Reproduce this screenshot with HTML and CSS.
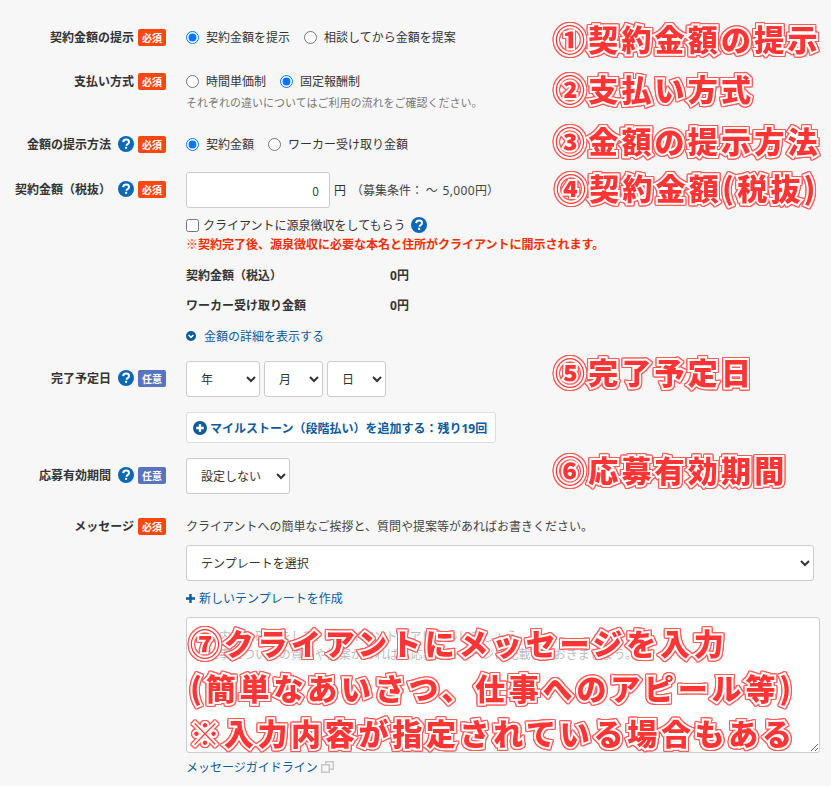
FILE: index.html
```html
<!DOCTYPE html>
<html lang="ja">
<head>
<meta charset="utf-8">
<title>応募フォーム</title>
<link rel="stylesheet" href="styles.css">
</head>
<body>
<main class="form">
  <div class="row row-1">
    <div class="label"><span>契約金額の提示</span><span class="badge req">必須</span></div>
    <div class="field radios">
      <label class="radio"><input type="radio" name="a" checked>契約金額を提示</label>
      <label class="radio"><input type="radio" name="a">相談してから金額を提案</label>
    </div>
  </div>
  <div class="row row-2">
    <div class="label"><span>支払い方式</span><span class="badge req">必須</span></div>
    <div class="field">
      <div class="radios">
        <label class="radio"><input type="radio" name="b">時間単価制</label>
        <label class="radio"><input type="radio" name="b" checked>固定報酬制</label>
      </div>
      <p class="hint">それぞれの違いについては<a class="link">ご利用の流れ</a>をご確認ください。</p>
    </div>
  </div>
  <div class="row row-3">
    <div class="label"><span>金額の提示方法</span><svg class="help" viewBox="0 0 16 16"><use href="#q"/></svg><span class="badge req">必須</span></div>
    <div class="field radios">
      <label class="radio"><input type="radio" name="c" checked>契約金額</label>
      <label class="radio"><input type="radio" name="c">ワーカー受け取り金額</label>
    </div>
  </div>
  <div class="row row-4">
    <div class="label label-amount"><span>契約金額（税抜）</span><svg class="help" viewBox="0 0 16 16"><use href="#q"/></svg><span class="badge req">必須</span></div>
    <div class="field">
      <div class="amount"><input class="amount-input" type="text" value="0"><span>円</span><span class="cond">（募集条件： ～ <span class="num">5,000</span>円）</span></div>
      <label class="check"><input type="checkbox">クライアントに源泉徴収をしてもらう<svg class="help" viewBox="0 0 16 16"><use href="#q"/></svg></label>
      <p class="warn">※契約完了後、源泉徴収に必要な本名と住所がクライアントに開示されます。</p>
      <dl class="sum">
        <dt>契約金額（税込）</dt><dd><span class="num">0</span>円</dd>
        <dt>ワーカー受け取り金額</dt><dd><span class="num">0</span>円</dd>
      </dl>
      <a class="link detail"><svg class="chev" viewBox="0 0 10 10"><circle cx="5" cy="5" r="5" fill="#0b5a99"/><path d="M2.600 4l2.400 2.400L7.400 4" fill="none" stroke="#fff" stroke-width="1.500"/></svg>金額の詳細を表示する</a>
    </div>
  </div>
  <div class="row row-5">
    <div class="label"><span>完了予定日</span><svg class="help" viewBox="0 0 16 16"><use href="#q"/></svg><span class="badge opt">任意</span></div>
    <div class="field">
      <div class="dates">
        <select class="sel sel-y"><option>年</option></select>
        <select class="sel sel-m"><option>月</option></select>
        <select class="sel sel-d"><option>日</option></select>
      </div>
      <button class="stone" type="button"><svg class="plus" viewBox="0 0 14 14"><circle cx="7" cy="7" r="7" fill="#0b5a99"/><path d="M7 3.200v7.600M3.200 7h7.600" stroke="#fff" stroke-width="2.400"/></svg><span>マイルストーン（段階払い）を追加する：残り<span class="num">19</span>回</span></button>
    </div>
  </div>
  <div class="row row-6">
    <div class="label"><span>応募有効期間</span><svg class="help" viewBox="0 0 16 16"><use href="#q"/></svg><span class="badge opt">任意</span></div>
    <div class="field"><select class="sel sel-p"><option>設定しない</option></select></div>
  </div>
  <div class="row row-7">
    <div class="label"><span>メッセージ</span><span class="badge req">必須</span></div>
    <div class="field">
      <p class="lead">クライアントへの簡単なご挨拶と、質問や提案等があればお書きください。</p>
      <select class="sel sel-t"><option>テンプレートを選択</option></select>
      <a class="link new"><svg class="mini-plus" viewBox="0 0 9 9"><path d="M4.500 0v9M0 4.500h9" stroke="#0b5a99" stroke-width="2.400"/></svg>新しいテンプレートを作成</a>
      <textarea class="msg" placeholder="契約内容の確認をして、クライアントにアピールしましょう。&#10;お仕事についての質問や提案があれば、応募メッセージに記載しておきましょう。"></textarea>
      <a class="link guide">メッセージガイドライン<svg class="ext" viewBox="0 0 13 12"><path d="M4.750.75h7.500v7.500h-7.500z" fill="none" stroke="#c8c8c8" stroke-width="1.500"/><path d="M.75 3.750h7.500v7.500H.75z" fill="#f7f7f7" stroke="#c8c8c8" stroke-width="1.500"/></svg></a>
    </div>
  </div>
</main>

<div class="note n1">①契約金額の提示</div>
<div class="note n2">②支払い方式</div>
<div class="note n3">③金額の提示方法</div>
<div class="note n4">④契約金額(税抜)</div>
<div class="note n5">⑤完了予定日</div>
<div class="note n6">⑥応募有効期間</div>
<div class="note n7">⑦クライアントにメッセージを入力</div>
<div class="note n8">(簡単なあいさつ、仕事へのアピール等)</div>
<div class="note n9">※入力内容が指定されている場合もある</div>

<svg class="defs" width="0" height="0">
  <symbol id="q" viewBox="0 0 16 16">
    <circle cx="8" cy="8" r="8" fill="#0b68b5"/>
    <path d="M5.200 6.100C5.300 4.500 6.500 3.600 8.100 3.600c1.700 0 2.900 1 2.900 2.400 0 1.100-.6 1.700-1.400 2.200-.8.500-1 .8-1 1.600" fill="none" stroke="#fff" stroke-width="2"/>
    <rect x="7.100" y="10.800" width="2" height="2" fill="#fff"/>
  </symbol>
</svg>
</body>
</html>
```
FILE: styles.css
```css
* { box-sizing: border-box; }
html, body { margin: 0; height: 786px; overflow: hidden; }
body {
  position: relative;
  background: #f7f7f7;
  color: #333;
  font: 12px/18px "Noto Sans CJK JP", "Noto Sans", sans-serif;
}
p, dl, dd { margin: 0; }
.num { font-family: "Noto Sans", "Noto Sans CJK JP", sans-serif; line-height: 1; }
.form { padding-top: 28px; display: flex; flex-direction: column; }
.row { display: grid; grid-template-columns: 166px 1fr; column-gap: 20px; align-items: start; }
.label {
  display: flex; justify-content: flex-end; align-items: center; gap: 4px;
  font-weight: 700; height: 18px;
}
.help { width: 16px; height: 16px; margin-left: 3px; flex: none; }
.badge {
  flex: none; width: 28px; height: 17px; border-radius: 2px;
  color: #fff; font-size: 10px; line-height: 17px; text-align: center; font-weight: 700;
}
.req { background: #f9480b; }
.opt { background: #5a73be; }
.radios { display: flex; gap: 14px; }
.radio, .check { display: flex; align-items: center; }
.radio input { width: 13px; height: 13px; margin: 0 7px 0 0; accent-color: #0075ff; }
.hint { color: #777; margin-top: 3px; font-size: 11px; }
.link { color: #0b5a99; }
.hint .link { color: #777; }
.row-2 { margin-top: 26px; }
.row-3 { margin-top: 24px; }
.row-4 { margin-top: 19px; }
.label-amount { height: 34px; }
.amount { display: flex; align-items: center; gap: 4px; height: 36px; }
.amount-input {
  width: 144px; height: 36px; border: 1px solid #ccc; border-radius: 3px; background: #fff;
  text-align: right; padding: 0 10px; color: #444; font: 12px "Noto Sans CJK JP", sans-serif;
}
.cond { margin-left: 1px; color: #444; }
.cond .num { margin-left: 2px; letter-spacing: .4px; }
.check { margin-top: 8px; gap: 0; }
.check input { width: 13px; height: 13px; margin: 0 4px 0 0; }
.check .help { margin-left: 5px; }
.warn { color: #f52d00; font-weight: 700; margin-top: 1px; font-size: 12px; }
.sum { display: grid; grid-template-columns: 204px 1fr; row-gap: 12px; margin-top: 13px; font-weight: 700; }
.detail { display: flex; align-items: center; gap: 8px; margin-top: 13px; }
.chev { width: 10px; height: 10px; }
.row-5 { margin-top: 16px; }
.row-5 .label { height: 34px; }
.dates { display: flex; gap: 4px; }
.sel {
  height: 36px; border: 1px solid #ccc; border-radius: 3px; background-color: #fff;
  color: #333; font: 12px "Noto Sans CJK JP", sans-serif; padding: 0 10px 2px;
}
.sel-y { width: 74px; }
.sel-m { width: 59px; }
.sel-d { width: 59px; }
.stone {
  display: flex; align-items: center; gap: 3px; margin-top: 15px;
  width: 310px; height: 31px; padding: 0 6px;
  background: #fff; border: 1px solid #ddd; border-radius: 3px;
  color: #0b5a99; font: 700 12px "Noto Sans CJK JP", sans-serif;
}
.plus { width: 14px; height: 14px; flex: none; }
.row-6 { margin-top: 15px; }
.row-6 .label { height: 34px; }
.sel-p { width: 104px; }
.row-7 { margin-top: 23px; }
.lead { color: #444; }
.sel-t { display: block; width: 628px; margin-top: 10px; }
.new { display: flex; align-items: center; gap: 4px; margin-top: 8px; }
.mini-plus { width: 9px; height: 9px; }
.msg {
  display: block; width: 634px; height: 136px; margin-top: 10px; padding: 9px 8px;
  border: 1px solid #ccc; border-radius: 3px; background: #fff; resize: both;
  font: 12px/18px "Noto Sans CJK JP", sans-serif;
}
.msg::placeholder { color: #bbb; }
.guide { display: flex; align-items: center; gap: 3px; margin-top: 5px; }
.ext { width: 13px; height: 12px; }
.defs { position: absolute; }
.note {
  position: absolute; white-space: nowrap;
  font: 900 30px/40px "Noto Sans CJK JP", sans-serif;
  letter-spacing: 3.200px;
  color: #ff3535;
  -webkit-text-stroke: 4px #fff;
  paint-order: stroke fill;
  filter: drop-shadow(1px 0 0 #ff5a5a) drop-shadow(-1px 0 0 #ff5a5a) drop-shadow(0 1px 0 #ff5a5a) drop-shadow(0 -1px 0 #ff5a5a);
}
.n1 { left: 555px; top: 18px; }
.n2 { left: 555px; top: 68px; }
.n3 { left: 555px; top: 120px; }
.n4 { left: 556px; top: 167px; }
.n5 { left: 555px; top: 351px; }
.n6 { left: 555px; top: 449px; }
.n7 { left: 190px; top: 622px; letter-spacing: 3.700px; }
.n8 { left: 190px; top: 667px; letter-spacing: 3.800px; }
.n9 { left: 190px; top: 712px; letter-spacing: 3.700px; }
```
